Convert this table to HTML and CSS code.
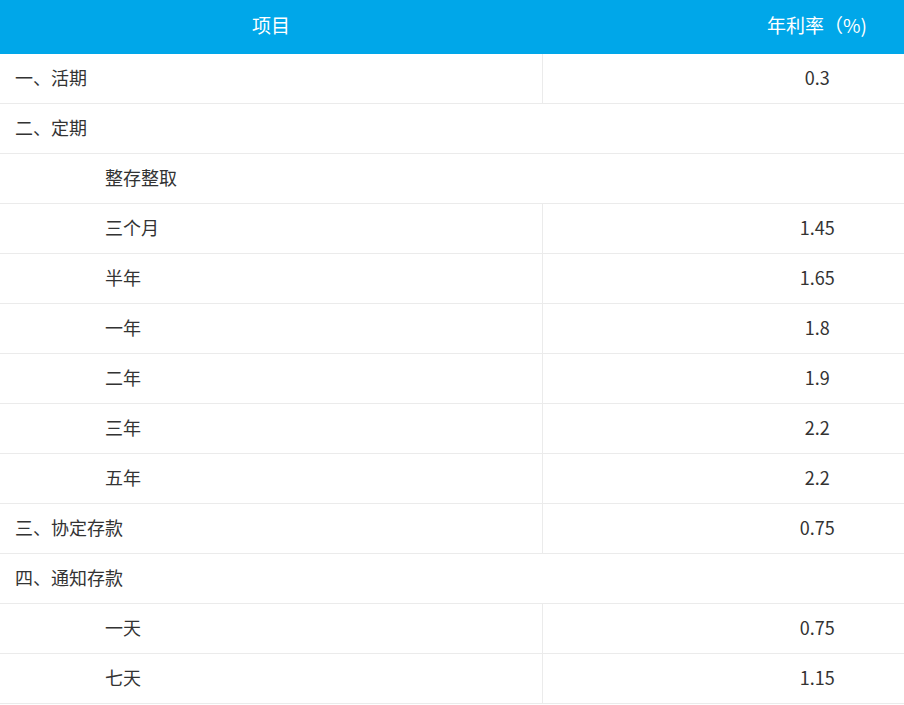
FILE: index.html
```html
<!DOCTYPE html>
<html lang="zh-CN">
<head>
<meta charset="utf-8">
<link rel="stylesheet" href="styles.css">
</head>
<body>
<table class="rates">
  <colgroup><col class="c-name"><col class="c-rate"></colgroup>
  <thead>
    <tr><th>项目</th><th>年利率（%)</th></tr>
  </thead>
  <tbody>
    <tr><td class="lv1">一、活期</td><td class="val">0.3</td></tr>
    <tr><td class="lv1" colspan="2">二、定期</td></tr>
    <tr><td class="lv2" colspan="2">整存整取</td></tr>
    <tr><td class="lv2">三个月</td><td class="val">1.45</td></tr>
    <tr><td class="lv2">半年</td><td class="val">1.65</td></tr>
    <tr><td class="lv2">一年</td><td class="val">1.8</td></tr>
    <tr><td class="lv2">二年</td><td class="val">1.9</td></tr>
    <tr><td class="lv2">三年</td><td class="val">2.2</td></tr>
    <tr><td class="lv2">五年</td><td class="val">2.2</td></tr>
    <tr><td class="lv1">三、协定存款</td><td class="val">0.75</td></tr>
    <tr><td class="lv1" colspan="2">四、通知存款</td></tr>
    <tr><td class="lv2">一天</td><td class="val">0.75</td></tr>
    <tr><td class="lv2">七天</td><td class="val">1.15</td></tr>
  </tbody>
</table>
</body>
</html>
```
FILE: styles.css
```css
html, body {
  margin: 0;
  padding: 0;
  background: #fff;
  overflow: hidden;
}
body {
  font-family: "Noto Sans CJK SC", "Noto Sans", sans-serif;
  color: #333;
}
.rates {
  width: 1092px;
  border-collapse: collapse;
  table-layout: fixed;
}
.c-name { width: 542px; }
.c-rate { width: 550px; }
.rates th {
  background: #00a7e9;
  color: #fff;
  font-weight: normal;
  font-size: 19px;
  height: 48px;
  padding: 0 0 6px 0;
  text-align: center;
}
.rates td {
  height: 46px;
  padding: 0 0 3px 0;
  font-size: 18px;
  border-bottom: 1px solid #ebebeb;
}
.rates td.lv1 { padding-left: 15px; }
.rates td.lv2 { padding-left: 105px; }
.rates td.val {
  text-align: center;
  border-left: 1px solid #ebebeb;
}
```
